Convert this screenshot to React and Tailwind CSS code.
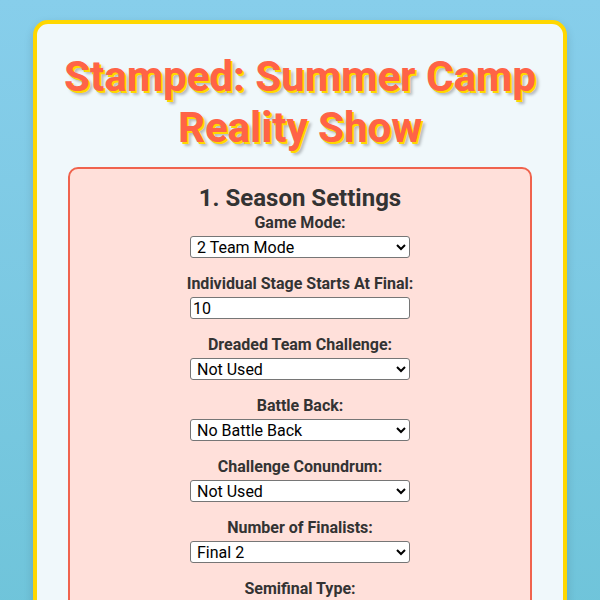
import React, { useState } from 'react';

const fields = [
  { label: 'Game Mode:', type: 'select', options: ['2 Team Mode', '3 Team Mode', 'Individual Mode'] },
  { label: 'Individual Stage Starts At Final:', type: 'number', value: '10' },
  { label: 'Dreaded Team Challenge:', type: 'select', options: ['Not Used', 'Used'] },
  { label: 'Battle Back:', type: 'select', options: ['No Battle Back', 'Battle Back'] },
  { label: 'Challenge Conundrum:', type: 'select', options: ['Not Used', 'Used'] },
  { label: 'Number of Finalists:', type: 'select', options: ['Final 2', 'Final 3', 'Final 4'] },
  { label: 'Semifinal Type:', type: 'select', options: ['Standard', 'Elimination'] },
];

const Field = ({ field }) => {
  const [value, setValue] = useState(field.type === 'select' ? field.options[0] : field.value);

  return (
    <div className="flex flex-col items-center mb-4">
      <label className="text-base font-bold text-[#333] leading-[19px] mb-1">{field.label}</label>
      {field.type === 'select' ? (
        <select
          value={value}
          onChange={(e) => setValue(e.target.value)}
          className="w-[220px] h-[22px] bg-white border border-[#767676] rounded-[3px] text-base text-black px-[2px] leading-none"
        >
          {field.options.map((o) => (
            <option key={o}>{o}</option>
          ))}
        </select>
      ) : (
        <input
          type="text"
          value={value}
          onChange={(e) => setValue(e.target.value)}
          className="w-[220px] h-[22px] bg-white border border-[#767676] rounded-[3px] text-base text-black px-[2px] leading-none outline-none"
        />
      )}
    </div>
  );
};

const App = () => {
  return (
    <div className="min-h-screen w-full bg-gradient-to-b from-[#87ceeb] to-[#6cc3d8] px-[33px] pt-[20px] font-['Roboto',sans-serif]">
      <div className="bg-[#f0f8fb] border-4 border-[#ffd700] rounded-[15px] shadow-[0_4px_10px_rgba(0,0,0,0.15)] px-[31px] pt-[27px] pb-6">
        {/* Title */}
        <h1 className="-mx-[16px] text-center text-[42px] leading-[51px] font-bold text-[#ff6347] [text-shadow:2px_2px_0_#ffd700,4px_4px_3px_rgba(0,0,0,0.25)]">
          Stamped: Summer Camp Reality Show
        </h1>

        {/* Season settings */}
        <div className="mt-[14px] bg-[#ffe0da] border-2 border-[#f0634d] rounded-[10px] pt-[15px] pb-4">
          <h2 className="text-center text-[24px] leading-[28px] font-bold text-[#333] mb-[1px]">1. Season Settings</h2>
          {fields.map((f) => (
            <Field key={f.label} field={f} />
          ))}
        </div>
      </div>
    </div>
  );
};

export default App;
